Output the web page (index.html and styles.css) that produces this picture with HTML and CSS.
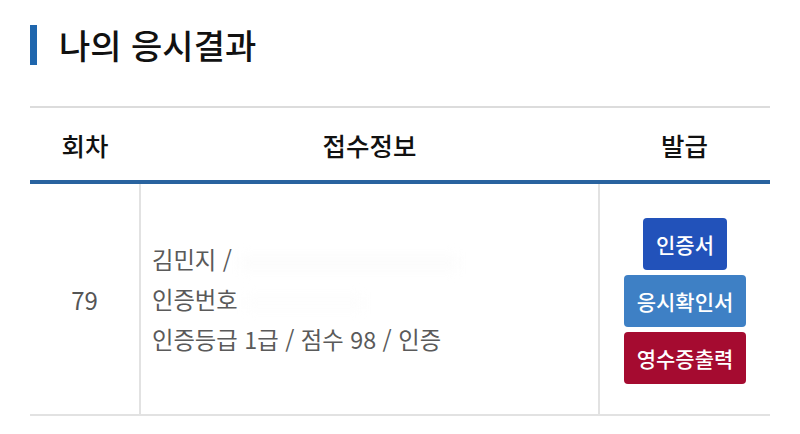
FILE: index.html
```html
<!DOCTYPE html>
<html lang="ko">
<head>
<meta charset="utf-8">
<link rel="stylesheet" href="styles.css">
</head>
<body>
<div class="page">
  <h2 class="title"><span class="bar"></span><span class="title-text">나의 응시결과</span></h2>
  <table class="result">
    <colgroup>
      <col class="c1"><col class="c2"><col class="c3">
    </colgroup>
    <thead>
      <tr><th>회차</th><th>접수정보</th><th>발급</th></tr>
    </thead>
    <tbody>
      <tr>
        <td class="round">79</td>
        <td class="info">
          <div class="line">김민지 / <span class="redact"></span></div>
          <div class="line">인증번호 <span class="redact short"></span></div>
          <div class="line">인증등급 1급 / 점수 98 / 인증</div>
        </td>
        <td class="issue">
          <div class="btns">
            <a class="btn btn-cert">인증서</a>
            <a class="btn btn-confirm">응시확인서</a>
            <a class="btn btn-receipt">영수증출력</a>
          </div>
        </td>
      </tr>
    </tbody>
  </table>
</div>
</body>
</html>
```
FILE: styles.css
```css
html, body {
  margin: 0;
  padding: 0;
  background: #fff;
}
body {
  font-family: "Noto Sans CJK KR", "Noto Sans", sans-serif;
  color: #111;
}
.page {
  padding: 25px 30px 0 30px;
}
.title {
  display: flex;
  align-items: center;
  gap: 22px;
  margin: 0;
  height: 40px;
  font-size: 34px;
  font-weight: 500;
  color: #111;
}
.bar {
  width: 7px;
  height: 40px;
  background: #1f66ad;
}
.title-text {
  line-height: 40px;
}
.result {
  margin-top: 41px;
  width: 740px;
  border-collapse: collapse;
  table-layout: fixed;
}
.c1 { width: 110px; }
.c2 { width: 459px; }
.c3 { width: 171px; }
.result thead th {
  height: 72px;
  padding: 0;
  border-top: 2px solid #dcdcdc;
  border-bottom: 4px solid #29639f;
  font-size: 25.5px;
  font-weight: 500;
  color: #111;
  text-align: center;
  vertical-align: middle;
}
.result tbody td {
  height: 230px;
  padding: 0;
  border-bottom: 2px solid #e2e2e2;
  vertical-align: middle;
}
.result tbody td + td {
  border-left: 2px solid #e2e2e2;
}
.round {
  text-align: center;
  font-size: 24px;
  color: #555;
}
.info {
  padding-left: 11px !important;
  font-size: 23.3px;
  color: #5a5a5a;
}
.line {
  line-height: 40px;
  white-space: nowrap;
}
.redact {
  display: inline-block;
  width: 220px;
  height: 14px;
  vertical-align: middle;
  background: #fcfcfc;
  filter: blur(6px);
}
.redact.short {
  width: 120px;
  background: #fdfdfd;
}
.btns {
  display: flex;
  flex-direction: column;
  align-items: center;
  gap: 5px;
  padding-top: 3px;
}
.btn {
  display: block;
  padding: 0 13px;
  height: 52px;
  line-height: 52px;
  border-radius: 4px;
  color: #fff;
  font-size: 21px;
  font-weight: 500;
  text-decoration: none;
}
.btn-cert { background: #2252ba; }
.btn-confirm { background: #3e80c5; }
.btn-receipt { background: #a50b30; }
```
